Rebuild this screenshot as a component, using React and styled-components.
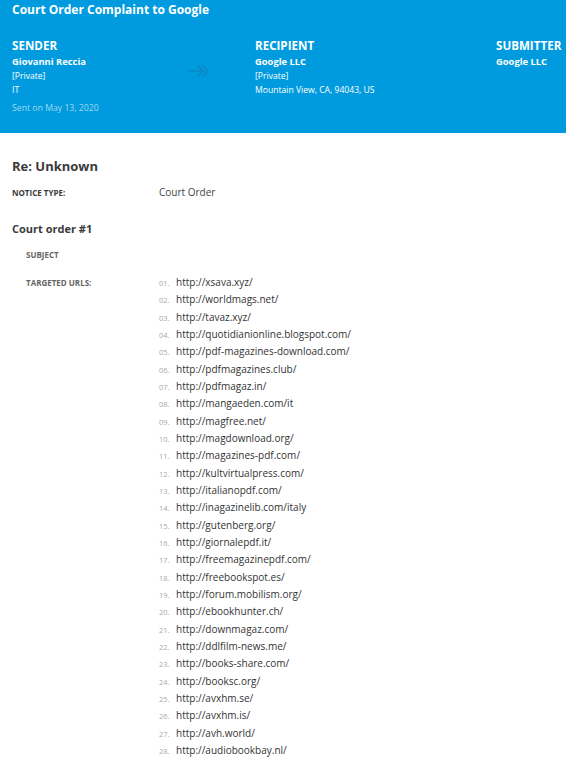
import React from "react";
import styled, { createGlobalStyle } from "styled-components";

const Global = createGlobalStyle`
  html, body { margin: 0; padding: 0; background: #fff; }
  body { font-family: "Open Sans", "Noto Sans", sans-serif; color: #3d3d3d; }
`;

const Header = styled.header`
  background: #009bde;
  color: #fff;
  height: 133px;
  padding: 0 12px;
  box-sizing: border-box;
`;

const Title = styled.h1`
  margin: 0;
  font-size: 12px;
  line-height: 20px;
  font-weight: 700;
`;

const Parties = styled.div`
  display: grid;
  grid-template-columns: 176px 67px 241px auto;
  margin-top: 17px;
`;

const Party = styled.div`
  display: flex;
  flex-direction: column;
`;

const PartyRole = styled.div`
  font-size: 11.6px;
  font-weight: 700;
  line-height: 18px;
  text-transform: uppercase;
`;

const PartyName = styled.div`
  font-size: 9.4px;
  font-weight: 700;
  line-height: 14px;
`;

const PartyLine = styled.div`
  font-size: 8.6px;
  line-height: 14px;
`;

const SentOn = styled.div`
  font-size: 8.7px;
  line-height: 14px;
  margin-top: 4px;
  color: rgba(255, 255, 255, 0.62);
`;

const ArrowBox = styled.div`
  padding-top: 23px;
`;

const Main = styled.main`
  padding: 24px 12px 0;
`;

const Subject = styled.h2`
  margin: 0;
  font-size: 13px;
  line-height: 18px;
  font-weight: 700;
  color: #3a3a3a;
`;

const FieldRow = styled.div`
  display: grid;
  grid-template-columns: ${(p) => p.$labelWidth}px 1fr;
  align-items: baseline;
  padding-left: ${(p) => p.$indent || 0}px;
  margin-top: ${(p) => p.$top}px;
`;

const Label = styled.div`
  font-size: 8px;
  font-weight: 700;
  text-transform: uppercase;
  color: ${(p) => (p.$muted ? "#666" : "#3a3a3a")};
  line-height: 17px;
`;

const Value = styled.div`
  font-size: 10px;
  line-height: 17px;
  color: #444;
`;

const SectionTitle = styled.h3`
  margin: 19px 0 0;
  font-size: 11px;
  line-height: 18px;
  font-weight: 700;
  color: #3a3a3a;
`;

const UrlList = styled.ol`
  list-style: none;
  margin: 0;
  padding: 0;
`;

const UrlItem = styled.li`
  display: flex;
  align-items: baseline;
  height: 17.34px;
  line-height: 17.34px;
`;

const UrlNum = styled.span`
  width: 17px;
  font-size: 7.5px;
  color: #a9a9a9;
`;

const UrlText = styled.span`
  font-size: 10px;
  color: #333;
`;

const urls = [
  "http://xsava.xyz/",
  "http://worldmags.net/",
  "http://tavaz.xyz/",
  "http://quotidianionline.blogspot.com/",
  "http://pdf-magazines-download.com/",
  "http://pdfmagazines.club/",
  "http://pdfmagaz.in/",
  "http://mangaeden.com/it",
  "http://magfree.net/",
  "http://magdownload.org/",
  "http://magazines-pdf.com/",
  "http://kultvirtualpress.com/",
  "http://italianopdf.com/",
  "http://inagazinelib.com/italy",
  "http://gutenberg.org/",
  "http://giornalepdf.it/",
  "http://freemagazinepdf.com/",
  "http://freebookspot.es/",
  "http://forum.mobilism.org/",
  "http://ebookhunter.ch/",
  "http://downmagaz.com/",
  "http://ddlfilm-news.me/",
  "http://books-share.com/",
  "http://booksc.org/",
  "http://avxhm.se/",
  "http://avxhm.is/",
  "http://avh.world/",
  "http://audiobookbay.nl/",
];

function FlowArrow() {
  return (
    <svg width="22" height="12" viewBox="0 0 22 12" fill="none" stroke="#0a86c2" strokeWidth="1.6" strokeLinecap="round" strokeLinejoin="round">
      <line x1="1" y1="6" x2="15" y2="6" />
      <polyline points="10,1 15,6 10,11" />
      <polyline points="15,1 20,6 15,11" />
    </svg>
  );
}

export default function App() {
  return (
    <>
      <Global />
      <Header>
        <Title>Court Order Complaint to Google</Title>
        <Parties>
          <Party>
            <PartyRole>Sender</PartyRole>
            <PartyName>Giovanni Reccia</PartyName>
            <PartyLine>[Private]</PartyLine>
            <PartyLine>IT</PartyLine>
            <SentOn>Sent on May 13, 2020</SentOn>
          </Party>
          <ArrowBox>
            <FlowArrow />
          </ArrowBox>
          <Party>
            <PartyRole>Recipient</PartyRole>
            <PartyName>Google LLC</PartyName>
            <PartyLine>[Private]</PartyLine>
            <PartyLine>Mountain View, CA, 94043, US</PartyLine>
          </Party>
          <Party>
            <PartyRole>Submitter</PartyRole>
            <PartyName>Google LLC</PartyName>
          </Party>
        </Parties>
      </Header>
      <Main>
        <Subject>Re: Unknown</Subject>
        <FieldRow $labelWidth={147} $top={9}>
          <Label>Notice Type:</Label>
          <Value>Court Order</Value>
        </FieldRow>
        <SectionTitle>Court order #1</SectionTitle>
        <FieldRow $labelWidth={133} $indent={14} $top={8}>
          <Label $muted>Subject</Label>
          <Value />
        </FieldRow>
        <FieldRow $labelWidth={133} $indent={14} $top={11}>
          <Label $muted>Targeted URLs:</Label>
          <UrlList>
            {urls.map((u, i) => (
              <UrlItem key={u}>
                <UrlNum>{String(i + 1).padStart(2, "0")}.</UrlNum>
                <UrlText>{u}</UrlText>
              </UrlItem>
            ))}
          </UrlList>
        </FieldRow>
      </Main>
    </>
  );
}
